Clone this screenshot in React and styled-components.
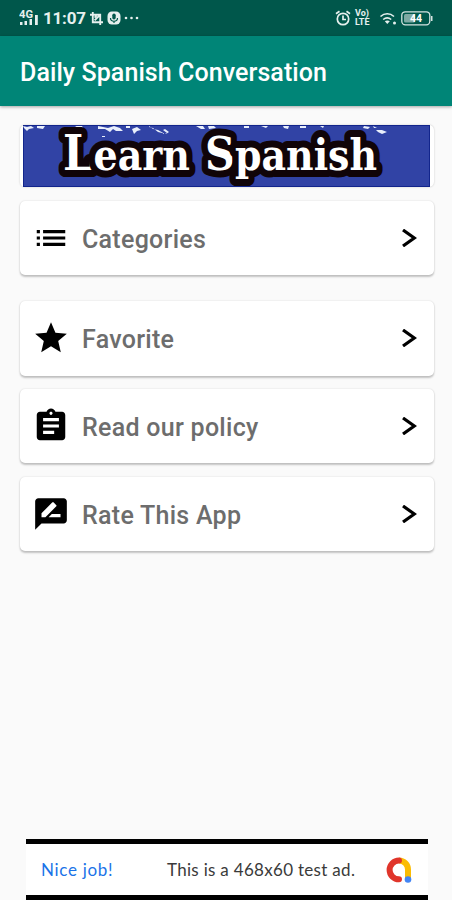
import React from "react";
import styled, { createGlobalStyle } from "styled-components";
import { MdList, MdStar, MdAssignment } from "react-icons/md";

const RateIcon = () => (
  <svg viewBox="0 0 24 24" fill="#000">
    <path
      fillRule="evenodd"
      d="M20 2H4c-1.100 0-2 .9-2 2v18l4-4h14c1.100 0 2-.9 2-2V4c0-1.100-.9-2-2-2zM6 14v-2.470l6.880-6.880c.2-.2.510-.2.710 0l1.770 1.770c.2.2.2.510 0 .710L8.470 14H6zm12 0h-7.500l2-2H18v2z"
    />
  </svg>
);

const items = [
  { id: 1, label: "Categories", icon: <MdList />, gap: "26px" },
  { id: 2, label: "Favorite", icon: <MdStar />, gap: "13.300px" },
  { id: 3, label: "Read our policy", icon: <MdAssignment />, gap: "13.300px" },
  { id: 4, label: "Rate This App", icon: <RateIcon />, gap: "0" }
];

const StatusBar = () => (
  <Status>
    <Group>
      <Signal viewBox="0 0 20 18">
        <path d="M1 13h2.500v3H1zM5.500 12H8v4H5.500zM10.500 10H13v6h-2.500zM16 6h2.800v10H16z" />
        <text x="0" y="8.500" fontSize="10" fontWeight="700" textLength="14" lengthAdjust="spacingAndGlyphs">
          4G
        </text>
      </Signal>
      <Time>11:07</Time>
      <Crop viewBox="0 0 14 14">
        <path d="M0 3h11v11M3 0v11h11M5 9l5-5M5 6l2-2" />
      </Crop>
      <Mic viewBox="0 0 14 14">
        <rect x=".5" y=".5" width="13" height="13" rx="4.500" fill="#e6f0ee" />
        <rect x="5.300" y="2.500" width="3.400" height="6" rx="1.700" fill="#00574b" />
        <path d="M3.500 7c0 4.300 7 4.300 7 0M7 10v2" fill="none" stroke="#00574b" strokeWidth="1.200" />
      </Mic>
      <Dots viewBox="0 0 15 4">
        <circle cx="2" cy="2" r="1.300" />
        <circle cx="7.500" cy="2" r="1.300" />
        <circle cx="13" cy="2" r="1.300" />
      </Dots>
    </Group>
    <Group>
      <Alarm viewBox="0 0 16 16">
        <circle cx="8" cy="9" r="5.700" />
        <path d="M1 3.800L4.500 1.300M15 3.800l-3.500-2.500M8 5.500V9.500h3" />
      </Alarm>
      <Volte>
        <span>Vo)</span>
        <span>LTE</span>
      </Volte>
      <Wifi viewBox="0 0 18 14">
        <path d="M1.500 4.500c4-3.600 9.500-3.600 13.500 0M4.200 7.500c2.500-2.100 5.500-2.100 8 0" fill="none" stroke="#e6f0ee" strokeWidth="1.600" />
        <path d="M5.800 9.300c1.500-1 3.500-1 5 0L8.300 12z" fill="#e6f0ee" />
        <circle cx="15.500" cy="11" r="1.500" fill="#e6f0ee" />
      </Wifi>
      <Battery viewBox="0 0 32 15">
        <rect x=".8" y=".8" width="28" height="13" rx="3.500" fill="none" stroke="#d5e4e1" strokeWidth="1.300" />
        <rect x="3" y="3" width="11" height="8.600" rx="1.500" fill="#7ea9a3" />
        <path d="M30 5h1.500v5H30z" fill="#d5e4e1" />
        <text x="9" y="11.200" fontSize="10.500" fontWeight="700" fill="#fff" textLength="12">
          44
        </text>
      </Battery>
    </Group>
  </Status>
);

const Banner = () => (
  <BannerCard>
    <Logo viewBox="0 0 407 62">
      <Splash d="M0 1l4 1 4-1 3 2-5 1-2 2-3-3zM14 1l8 0-2 3-6-1zM52 1l7 0 2 3-6-1zM75 1l10 2 6-2 6 2 3 3-7 0-3-2-3 3-5-3-7 0zM103 1h4v2h-4zM109 4l5-2 4 3-4 1-3 3zM126 1l4 3 5 1 7 4 2-1-4-3 2-1 4 3-3 2-8-2-5-4-4-1zM173 1l7 0 2 3-4 0zM185 1h6l2 2-7 1zM221 1h5v2h-5zM238 1h7l-2 2zM260 1h6l-1 3-4-1zM277 1h6v2h-6zM297 1h4l-1 2zM341 1l6 1-2 2-5-1zM350 1l4 2-3 0zM353 5l6 0 5 2-5 2-4-2zM202 7l8 1 1 3-6-1zM79 11h3v1h-3zM335 10h2v2h-2z" />
      <LogoText x="40" y="44.800" textLength="127" lengthAdjust="spacingAndGlyphs">
        <tspan fontSize="48">L</tspan>earn
      </LogoText>
      <LogoText x="182" y="44.800" textLength="172" lengthAdjust="spacingAndGlyphs">
        <tspan fontSize="46">S</tspan>panish
      </LogoText>
    </Logo>
  </BannerCard>
);

const App = () => (
  <Page>
    <GlobalStyle />
    <StatusBar />
    <Toolbar>
      <Title>Daily Spanish Conversation</Title>
    </Toolbar>
    <Content>
      <Banner />
      {items.map(el => (
        <Card key={el.id} $gap={el.gap}>
          <IconBox>{el.icon}</IconBox>
          <Label>{el.label}</Label>
          <Arrow viewBox="0 0 16 18">
            <path d="M2 1L13.300 9 2 17" />
          </Arrow>
        </Card>
      ))}
    </Content>
    <Ad>
      <AdLink>Nice job!</AdLink>
      <AdText>This is a 468x60 test ad.</AdText>
      <AdLogo viewBox="0 0 28 28">
        <path d="M14 4.500c5 0 9 4 9 9v10" stroke="#fbbc04" />
        <path d="M14 4.500a9.400 9.400 0 0 0 0 18.800" stroke="#e0352b" strokeLinecap="round" />
        <circle cx="23" cy="23.500" r="3.300" fill="#4285f4" />
      </AdLogo>
    </Ad>
  </Page>
);

export default App;

const GlobalStyle = createGlobalStyle`
  body {
    margin: 0;
    background: #fafafa;
  }
  * {
    box-sizing: border-box;
  }
`;

const Page = styled.div`
  width: 452px;
  height: 900px;
  display: flex;
  flex-direction: column;
  overflow: hidden;
  background: #fafafa;
  font-family: Roboto, "Liberation Sans", sans-serif;
`;

const Status = styled.div`
  height: 36px;
  flex-shrink: 0;
  display: flex;
  align-items: center;
  justify-content: space-between;
  padding: 0 19px;
  background: #00574b;
  color: #e6f0ee;
`;

const Group = styled.div`
  display: flex;
  align-items: center;
`;

const Signal = styled.svg`
  width: 20px;
  height: 18px;
  fill: #e6f0ee;
`;

const Time = styled.div`
  width: 42px;
  margin: 0 5px 0 4px;
  font-size: 17px;
  font-weight: 700;
  line-height: 20px;
  letter-spacing: -0.2px;
  white-space: nowrap;
`;

const Crop = styled.svg`
  width: 13px;
  height: 13px;
  fill: none;
  stroke: #e6f0ee;
  stroke-width: 2;
`;

const Mic = styled.svg`
  width: 14px;
  height: 14px;
  margin-left: 4px;
`;

const Dots = styled.svg`
  width: 15px;
  height: 4px;
  margin-left: 3px;
  fill: #e6f0ee;
`;

const Alarm = styled.svg`
  width: 16px;
  height: 16px;
  fill: none;
  stroke: #e6f0ee;
  stroke-width: 1.7;
`;

const Volte = styled.div`
  width: 16px;
  margin: 0 8px 0 4px;
  display: flex;
  flex-direction: column;
  font-size: 9px;
  font-weight: 700;
  line-height: 9px;
`;

const Wifi = styled.svg`
  width: 18px;
  height: 14px;
  margin-top: 2px;
`;

const Battery = styled.svg`
  width: 32px;
  height: 15px;
  margin-left: 4px;
`;

const Toolbar = styled.header`
  height: 70px;
  flex-shrink: 0;
  display: flex;
  align-items: center;
  padding: 2px 20px 0;
  background: #008577;
  box-shadow: 0 1px 3px rgba(0, 0, 0, 0.35);
`;

const Title = styled.div`
  font-size: 25px;
  font-weight: 500;
  letter-spacing: 0.08px;
  color: #fff;
  white-space: nowrap;
`;

const Content = styled.main`
  flex: 1;
  display: flex;
  flex-direction: column;
  padding: 18.500px 18px 0 20px;
`;

const BannerCard = styled.div`
  height: 62.500px;
  margin-bottom: 13.500px;
  padding: 0 4px 0 3px;
  border-radius: 5px;
  background: #fff;
  box-shadow: 0 0 2px rgba(0, 0, 0, 0.22);
`;

const Logo = styled.svg`
  display: block;
  width: 407px;
  height: 62px;
  background: #3143a5;
  box-shadow: inset 0 0 0 1px #12258c;
`;

const Splash = styled.path`
  fill: #e9effb;
`;

const LogoText = styled.text`
  font-family: "DejaVu Serif", serif;
  font-size: 42px;
  font-weight: 700;
  fill: #fff;
  stroke: #100408;
  stroke-width: 14px;
  stroke-linejoin: round;
  paint-order: stroke fill;
`;

const Card = styled.div`
  height: 74.500px;
  flex-shrink: 0;
  display: flex;
  align-items: center;
  margin-bottom: ${props => props.$gap};
  padding: 0 17px 0 12px;
  border-radius: 5px;
  background: #fff;
  box-shadow: 0 1.500px 2px rgba(0, 0, 0, 0.22), 0 0 2px rgba(0, 0, 0, 0.1);
`;

const IconBox = styled.div`
  width: 38px;
  height: 38px;
  color: #000;

  svg {
    display: block;
    width: 38px;
    height: 38px;
  }
`;

const Label = styled.div`
  flex: 1;
  margin: 3px 0 0 12px;
  font-size: 25px;
  font-weight: 500;
  letter-spacing: 0.28px;
  color: #6d6d6d;
  white-space: nowrap;
`;

const Arrow = styled.svg`
  width: 16px;
  height: 18px;
  fill: none;
  stroke: #000;
  stroke-width: 3.2;
`;

const Ad = styled.footer`
  width: 402px;
  height: 61px;
  flex-shrink: 0;
  display: flex;
  align-items: center;
  margin-left: 26px;
  padding: 0 15px;
  border-top: 5px solid #000;
  border-bottom: 5px solid #000;
  background: #fff;
  font-family: Lato, sans-serif;
  font-size: 17px;
  letter-spacing: 0.3px;
  white-space: nowrap;
`;

const AdLink = styled.div`
  width: 126px;
  letter-spacing: 0.7px;
  color: #1a73e8;
`;

const AdText = styled.div`
  flex: 1;
  color: #3a3a3a;
`;

const AdLogo = styled.svg`
  width: 28px;
  height: 28px;
  fill: none;
  stroke-width: 6;
`;
